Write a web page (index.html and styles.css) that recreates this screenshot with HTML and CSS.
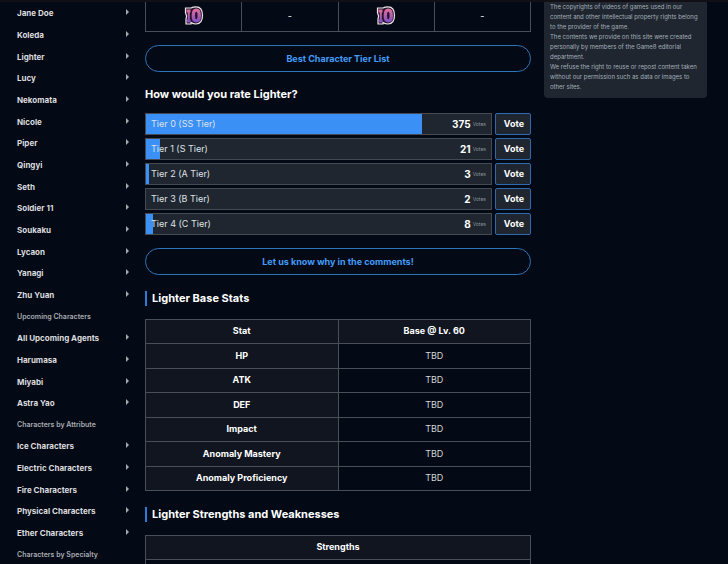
FILE: index.html
```html
<!doctype html>
<html lang="en">
<head>
    <meta charset="UTF-8">
    <title>Lighter</title>
    <link rel="stylesheet" href="styles.css">
</head>
<body>
<div class="page">
    <nav class="side">
        <ul>
            <li><a href="#">Jane Doe</a></li>
            <li><a href="#">Koleda</a></li>
            <li><a href="#">Lighter</a></li>
            <li><a href="#">Lucy</a></li>
            <li><a href="#">Nekomata</a></li>
            <li><a href="#">Nicole</a></li>
            <li><a href="#">Piper</a></li>
            <li><a href="#">Qingyi</a></li>
            <li><a href="#">Seth</a></li>
            <li><a href="#">Soldier 11</a></li>
            <li><a href="#">Soukaku</a></li>
            <li><a href="#">Lycaon</a></li>
            <li><a href="#">Yanagi</a></li>
            <li><a href="#">Zhu Yuan</a></li>
        </ul>
        <h4>Upcoming Characters</h4>
        <ul>
            <li><a href="#">All Upcoming Agents</a></li>
            <li><a href="#">Harumasa</a></li>
            <li><a href="#">Miyabi</a></li>
            <li><a href="#">Astra Yao</a></li>
        </ul>
        <h4>Characters by Attribute</h4>
        <ul>
            <li><a href="#">Ice Characters</a></li>
            <li><a href="#">Electric Characters</a></li>
            <li><a href="#">Fire Characters</a></li>
            <li><a href="#">Physical Characters</a></li>
            <li><a href="#">Ether Characters</a></li>
        </ul>
        <h4>Characters by Specialty</h4>
    </nav>

    <main class="main">
        <table class="tiers">
            <tr>
                <td>
                    <svg class="rank" viewBox="0 0 20 20" role="img" aria-label="T0">
                        <defs>
                            <linearGradient id="g" x1="0" y1="0" x2="0" y2="1">
                                <stop offset="0" stop-color="#e56f9b"/>
                                <stop offset="1" stop-color="#7d4fc4"/>
                            </linearGradient>
                        </defs>
                        <path d="M1.500 2H7Q9 .8 12 .8q6.500 0 6.500 8.500T12 18q-3 0-5-1.500V18H2v-5l.6-3L1.500 7z" fill="#2a1530" stroke="#eee5ea" stroke-width="1.200"/>
                        <path d="M2.500 3.500h4v3H5.800v7h.7v3H3v-3h.8v-7H2.500z" fill="url(#g)"/>
                        <path fill-rule="evenodd" d="M12.300 2.500q4.700 0 4.700 7t-4.700 7-4.700-7 4.700-7zM12.300 5.800q-1.300 0-1.300 3.700t1.300 3.700 1.300-3.700-1.300-3.700z" fill="url(#g)"/>
                    </svg>
                </td>
                <td>-</td>
                <td>
                    <svg class="rank" viewBox="0 0 20 20" role="img" aria-label="T0">
                        <path d="M1.500 2H7Q9 .8 12 .8q6.500 0 6.500 8.500T12 18q-3 0-5-1.500V18H2v-5l.6-3L1.500 7z" fill="#2a1530" stroke="#eee5ea" stroke-width="1.200"/>
                        <path d="M2.500 3.500h4v3H5.800v7h.7v3H3v-3h.8v-7H2.500z" fill="url(#g)"/>
                        <path fill-rule="evenodd" d="M12.300 2.500q4.700 0 4.700 7t-4.700 7-4.700-7 4.700-7zM12.300 5.800q-1.300 0-1.300 3.700t1.300 3.700 1.300-3.700-1.300-3.700z" fill="url(#g)"/>
                    </svg>
                </td>
                <td>-</td>
            </tr>
        </table>
        <a class="pill" href="#">Best Character Tier List</a>

        <h3>How would you rate Lighter?</h3>
        <ul class="poll">
            <li>
                <div class="bar"><i style="width: 80%"></i><span>Tier 0 (SS Tier)</span><b>375</b><small>Votes</small></div>
                <button>Vote</button>
            </li>
            <li>
                <div class="bar"><i style="width: 4%"></i><span>Tier 1 (S Tier)</span><b>21</b><small>Votes</small></div>
                <button>Vote</button>
            </li>
            <li>
                <div class="bar"><i style="width: 1%"></i><span>Tier 2 (A Tier)</span><b>3</b><small>Votes</small></div>
                <button>Vote</button>
            </li>
            <li>
                <div class="bar"><i style="width: 0%"></i><span>Tier 3 (B Tier)</span><b>2</b><small>Votes</small></div>
                <button>Vote</button>
            </li>
            <li>
                <div class="bar"><i style="width: 2%"></i><span>Tier 4 (C Tier)</span><b>8</b><small>Votes</small></div>
                <button>Vote</button>
            </li>
        </ul>
        <a class="pill" href="#">Let us know why in the comments!</a>

        <h2>Lighter Base Stats</h2>
        <table class="stats">
            <tr><th>Stat</th><th>Base @ Lv. 60</th></tr>
            <tr><th>HP</th><td>TBD</td></tr>
            <tr><th>ATK</th><td>TBD</td></tr>
            <tr><th>DEF</th><td>TBD</td></tr>
            <tr><th>Impact</th><td>TBD</td></tr>
            <tr><th>Anomaly Mastery</th><td>TBD</td></tr>
            <tr><th>Anomaly Proficiency</th><td>TBD</td></tr>
        </table>

        <h2>Lighter Strengths and Weaknesses</h2>
        <table class="stats">
            <tr><th>Strengths</th></tr>
            <tr><td></td></tr>
        </table>
    </main>

    <aside class="note">
        <p>The copyrights of videos of games used in our content and other intellectual property rights belong to the provider of the game.</p>
        <p>The contents we provide on this site were created personally by members of the Game8 editorial department.</p>
        <p>We refuse the right to reuse or repost content taken without our permission such as data or images to other sites.</p>
    </aside>
</div>
</body>
</html>
```
FILE: styles.css
```css
* {
    margin: 0;
    padding: 0;
    box-sizing: border-box;
    list-style: none;
}

body {
    height: 100vh;
    overflow: hidden;
    background: #030915;
    border-top: 2px solid #120f17;
    color: #fff;
    font: 9px/16px Inter, "Liberation Sans", sans-serif;
}

a {
    text-decoration: none;
}

.page {
    display: grid;
    grid-template-columns: 132px 1fr 163px;
    column-gap: 13px;
    align-items: start;
    padding-right: 21px;
}

.side {
    padding: 0 3px 0 17px;
}

.side li a {
    display: flex;
    align-items: center;
    justify-content: space-between;
    height: 22px;
    color: #dcdcdf;
    font-size: 8px;
    font-weight: 700;
}

.side li:nth-child(3n) a {
    height: 21px;
}

.side li a::after {
    content: "";
    margin-bottom: 2px;
    border: 3px solid transparent;
    border-left-color: #a5a8ad;
    border-right: 0;
}

.side h4 {
    height: 21px;
    color: #a9acb2;
    font-size: 7px;
    font-weight: 600;
    line-height: 21px;
}

table {
    width: 100%;
    border-collapse: collapse;
    table-layout: fixed;
    text-align: center;
}

th, td {
    border: 1px solid #4a4e57;
}

.tiers td {
    height: 29px;
    border-top: 0;
    vertical-align: middle;
}

.rank {
    display: block;
    width: 20px;
    height: 20px;
    margin: 0 auto 1px;
}

.pill {
    display: block;
    margin-top: 13px;
    border: 1px solid #2e75bb;
    border-radius: 14px;
    color: #439dfa;
    font-weight: 700;
    line-height: 25px;
    text-align: center;
}

h3 {
    padding: 12px 0 8px;
    font-size: 11px;
    line-height: 21px;
}

.poll li {
    display: flex;
    gap: 3px;
    margin-bottom: 3px;
}

.bar {
    display: flex;
    flex: 1;
    align-items: center;
    position: relative;
    height: 22px;
    padding: 0 5px;
    border: 1px solid #454a52;
    background: #20262f;
}

.bar i {
    position: absolute;
    top: 0;
    bottom: 0;
    left: 0;
    background: #3b90f6;
}

.bar span {
    flex: 1;
    position: relative;
    color: #dfe3e9;
}

.bar b {
    font-size: 10px;
}

.bar small {
    margin-left: 2px;
    color: #8d959e;
    font-size: 5px;
}

.poll button {
    width: 36px;
    padding-left: 2px;
    border: 1px solid #2c6bb0;
    border-radius: 2px;
    background: #20262f;
    color: #fff;
    font: inherit;
    font-weight: 700;
}

h2 {
    margin: 16px 0 13px;
    padding-left: 5px;
    border-left: 2px solid #2f7cd8;
    font-size: 11px;
    line-height: 15px;
}

.stats tr {
    height: 24px;
}

.stats tr:nth-child(even) {
    height: 25px;
}

.stats th {
    background: #10151f;
}

.stats td {
    color: #d5d6d9;
}

.note {
    padding: 0 6px 6px;
    border-radius: 0 0 4px 4px;
    background: #20262f;
    color: #a3b0b9;
    font-size: 6px;
    line-height: 10px;
}
```
